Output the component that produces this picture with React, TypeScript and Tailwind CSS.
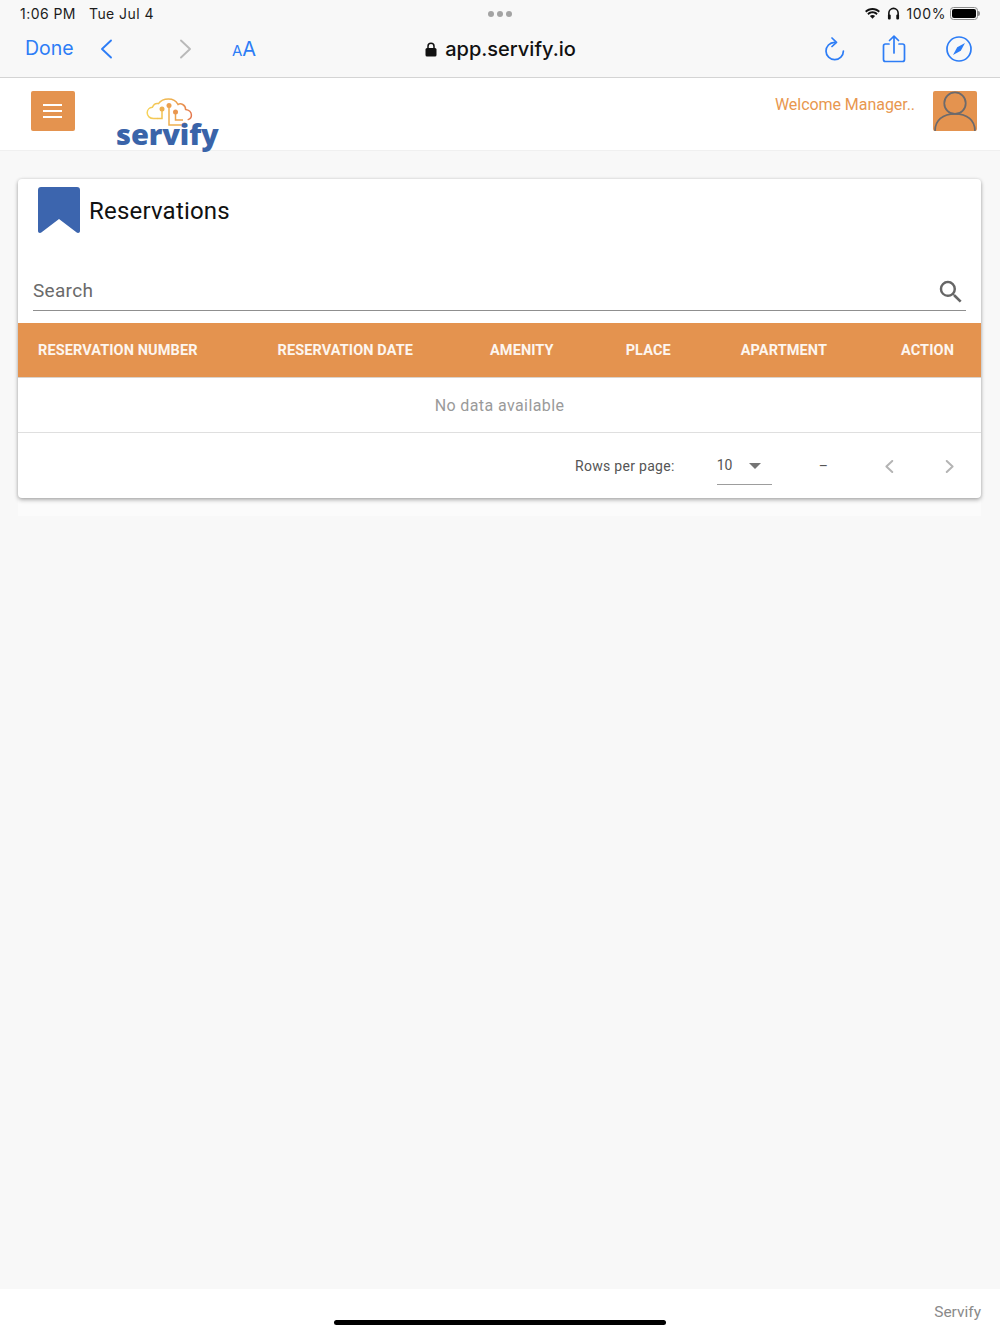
import React from "react";

function Chevron({ dir, className }: { dir: "l" | "r"; className: string }) {
  return (
    <svg viewBox="0 0 14 20" className={className} fill="none" stroke="currentColor" strokeWidth="1.9" strokeLinecap="round" strokeLinejoin="round">
      {dir === "l" ? <path d="M12 1.5 3 10l9 8.5" /> : <path d="M2 1.5 11 10l-9 8.5" />}
    </svg>
  );
}

function CloudLogo() {
  return (
    <svg viewBox="0 0 48 32" className="w-[48px] h-[32px] block" fill="none">
      <defs>
        <linearGradient id="g" x1="0" x2="1" y1="0" y2="0">
          <stop offset="0" stopColor="#f6d35b" />
          <stop offset="0.55" stopColor="#eeb04f" />
          <stop offset="1" stopColor="#e4794f" />
        </linearGradient>
      </defs>
      <path d="M11 20.500H7.500C3.800 20.500 1.200 18 1.200 14.800c0-3 2.300-5.300 5.200-5.500C7.500 6.600 10 5 12.500 5.600 14.600 2.600 18.400 1 22.400 1c4.400 0 8 2.400 9.600 5.500 1.400-.8 3.200-.8 4.700 0 1.800 1 2.900 2.800 2.900 4.900 3.400.4 5.800 2.800 5.800 5.600 0 2.400-1.300 4-3.200 4.600" stroke="url(#g)" strokeWidth="1.500" strokeLinecap="round" />
      <path d="M16 12v8.500h-5" stroke="#f2c452" strokeWidth="1.500" />
      <path d="M23 8v19h15" stroke="#eeb04f" strokeWidth="1.500" />
      <path d="M29.500 14v8h7.500" stroke="#eba44f" strokeWidth="1.500" />
      <circle cx="16" cy="11" r="2.500" fill="#eeb04f" />
      <circle cx="23" cy="7.500" r="2.500" fill="#eca14f" />
      <circle cx="29.500" cy="14" r="2.500" fill="#e9964f" />
      <circle cx="38.500" cy="27" r="2.500" fill="#e68f4f" />
    </svg>
  );
}

function Toolbar() {
  return (
    <div className="bg-[#f8f8f8] h-[78px] border-b border-[#d4d4d4] px-5 pt-[4px] font-['Inter',sans-serif]">
      <div className="flex items-center justify-between h-[18px] text-[14px] text-[#1c1c1c]">
        <div className="flex gap-[13px] w-[200px] tracking-[0.45px]">
          <span>1:06 PM</span>
          <span>Tue Jul 4</span>
        </div>
        <div className="flex gap-[3px] mt-[2px]">
          <span className="w-[6px] h-[6px] rounded-full bg-[#a3a3a3]" />
          <span className="w-[6px] h-[6px] rounded-full bg-[#a3a3a3]" />
          <span className="w-[6px] h-[6px] rounded-full bg-[#a3a3a3]" />
        </div>
        <div className="flex items-center justify-end w-[200px]">
          <svg viewBox="0 0 18 14" className="w-[17px] h-[13px]" fill="#111">
            <path d="M9 3.200c2.600 0 4.900 1 6.600 2.700l1.400-1.500C15 2.300 12.100 1 9 1S3 2.300 1 4.400l1.400 1.500C4.100 4.200 6.400 3.200 9 3.200Z" />
            <path d="M9 6.800c1.600 0 3.100.6 4.200 1.700l1.400-1.500C13.100 5.600 11.100 4.700 9 4.700S4.900 5.600 3.400 7l1.400 1.500C5.900 7.400 7.400 6.800 9 6.800Z" />
            <path d="M9 8.500c-1.100 0-2.100.4-2.800 1.100L9 12.600l2.800-3c-.7-.7-1.700-1.100-2.800-1.100Z" />
          </svg>
          <svg viewBox="0 0 14 14" className="w-[13px] h-[13px] ml-[6px]" fill="none" stroke="#111" strokeWidth="1.700">
            <path d="M2 9V6.500a5 5 0 0 1 10 0V9" />
            <rect x="1" y="8" width="3" height="5.500" rx="1.200" fill="#111" stroke="none" />
            <rect x="10" y="8" width="3" height="5.500" rx="1.200" fill="#111" stroke="none" />
          </svg>
          <span className="ml-[6px] tracking-[0.6px]">100%</span>
          <span className="relative w-[28px] h-[13px] rounded-[3.500px] border border-[#8c8c8c] p-[1px] ml-[4px] mr-[2px]">
            <span className="block w-[24px] h-full rounded-[2px] bg-black" />
            <span className="absolute -right-[3px] top-[3px] w-[2px] h-[5px] rounded-r-full bg-[#8c8c8c]" />
          </span>
        </div>
      </div>
      <div className="flex items-center h-[34px] mt-[10px] text-[#2d7df6]">
        <span className="text-[19.5px] ml-[5px] w-[73px]">Done</span>
        <Chevron dir="l" className="w-[14px] h-[20px] ml-[1px]" />
        <Chevron dir="r" className="w-[14px] h-[20px] ml-[66px] text-[#b9b9b9]" />
        <span className="ml-[39px] w-[30px] whitespace-nowrap">
          <span className="text-[15px]">A</span>
          <span className="text-[20px]">A</span>
        </span>
        <div className="flex-1 flex items-center justify-center text-[#111] font-medium text-[20px] mr-[84px]">
          <svg viewBox="0 0 12 15" className="w-[12px] h-[15px] mr-[8px]" fill="#111">
            <path d="M3 6.500V4.200a3 3 0 0 1 6 0v2.300" fill="none" stroke="#111" strokeWidth="1.500" />
            <rect x="0.500" y="6" width="11" height="8.500" rx="1.500" />
          </svg>
          app.servify.io
        </div>
        <svg viewBox="0 0 22 24" className="w-[22px] h-[24px] mr-[36px] ml-[1px]" fill="none" stroke="currentColor" strokeWidth="1.700" strokeLinecap="round" strokeLinejoin="round">
          <path d="M10.500 5.300A8.700 8.700 0 1 0 19.400 14" />
          <path d="m8 1 4.500 4.300L8 9.500" />
        </svg>
        <svg viewBox="0 0 24 28" className="w-[24px] h-[28px] mr-[40px]" fill="none" stroke="currentColor" strokeWidth="1.700" strokeLinecap="round" strokeLinejoin="round">
          <path d="M7 9H3.500A2 2 0 0 0 1.500 11v13.500a2 2 0 0 0 2 2h17a2 2 0 0 0 2-2V11a2 2 0 0 0-2-2H17" />
          <path d="M12 18V1.500M7.500 5.500 12 1.200l4.500 4.300" />
        </svg>
        <svg viewBox="0 0 26 26" className="w-[26px] h-[26px] mr-[8px]" fill="none">
          <circle cx="13" cy="13" r="12" stroke="currentColor" strokeWidth="1.700" />
          <path d="M19 7 14.800 14.800 7 19l4.200-7.800Z" fill="currentColor" />
        </svg>
      </div>
    </div>
  );
}

function Header() {
  return (
    <div className="bg-white h-[73px] border-b border-[#f0f0f0] flex pl-[30.500px] pr-[23px] pt-[13px] font-['Roboto',sans-serif]">
      <button className="w-[44px] h-[40px] rounded-[2px] bg-[#e4934f] flex flex-col items-center justify-center gap-[4px]">
        <span className="w-[19px] h-[2px] bg-white" />
        <span className="w-[19px] h-[2px] bg-white" />
        <span className="w-[19px] h-[2px] bg-white" />
      </button>
      <div className="ml-[41.500px] relative w-[104px]">
        <div className="ml-[30px] mt-[7px]"><CloudLogo /></div>
        <div className="absolute left-0 top-[23px] text-[29px] leading-[40px] font-extrabold text-[#3a64a9] font-['Open_Sans',sans-serif] tracking-[-0.1px]">servify</div>
      </div>
      <div className="ml-auto flex">
        <span className="text-[16px] leading-[18px] mt-[5px] text-[#e8974f] tracking-[-0.05px]">Welcome Manager..</span>
        <div className="ml-[18px] w-[44px] h-[40px] rounded-[2px] bg-[#e4934f] overflow-hidden">
          <svg viewBox="0 0 44 41" className="w-[44px] h-[40px]" fill="none" stroke="#6c6a6c" strokeWidth="1.800">
            <circle cx="22" cy="12.500" r="11" />
            <path d="M1.500 41c0-11 8-17.500 20.500-17.500S42.500 30 42.500 41" />
          </svg>
        </div>
      </div>
    </div>
  );
}

const columns = [
  { label: "RESERVATION NUMBER", cls: "" },
  { label: "RESERVATION DATE", cls: "ml-[80px]" },
  { label: "AMENITY", cls: "ml-[77px]" },
  { label: "PLACE", cls: "ml-[72px]" },
  { label: "APARTMENT", cls: "ml-[70px]" },
  { label: "ACTION", cls: "ml-[74px]" },
];

function Card() {
  return (
    <div className="bg-white rounded-[4px] shadow-[0_2px_4px_rgba(0,0,0,0.3),0_0_3px_rgba(0,0,0,0.12)] font-['Roboto',sans-serif]">
      <div className="flex h-[88px] pl-5 pt-2">
        <svg viewBox="0 0 42 46" className="w-[42px] h-[46px]">
          <path d="M3 0h36a3 3 0 0 1 3 3v41c0 1.800-2 2.600-3.300 1.500L21 32 3.300 45.500C2 46.600 0 45.800 0 44V3a3 3 0 0 1 3-3Z" fill="#3c65ae" />
        </svg>
        <h1 className="ml-[9px] mt-[9px] text-[24px] leading-[30px] text-[#111] tracking-[0.2px]">Reservations</h1>
      </div>
      <div className="mx-[15px] h-[44px] border-b border-[#8f8f8f] flex items-center justify-between pt-[6px]">
        <span className="text-[19px] text-[#6a6a6a] tracking-[0.3px]">Search</span>
        <svg viewBox="0 0 24 24" className="w-[30px] h-[30px]" fill="#666">
          <path d="M15.500 14h-.79l-.28-.27A6.470 6.470 0 0 0 16 9.500 6.500 6.500 0 1 0 9.500 16c1.610 0 3.090-.59 4.230-1.570l.27.28v.79l5 4.990L20.490 19l-4.990-5Zm-6 0C7.010 14 5 11.990 5 9.500S7.010 5 9.500 5 14 7.010 14 9.500 11.990 14 9.500 14Z" />
        </svg>
      </div>
      <div className="mt-3 h-[55px] bg-[#e4934f] flex items-center pl-5 pt-[2px] text-[14.500px] tracking-[0.1px] font-bold text-[#fdf6ef] border-b border-[#d9d3cd] whitespace-nowrap">
        {columns.map((c) => (
          <span key={c.label} className={c.cls}>{c.label}</span>
        ))}
      </div>
      <div className="h-[55px] border-b border-[#dfdfdf] flex items-center justify-center pt-[1px] text-[#9a9a9a] text-[16px] tracking-[0.4px]">
        No data available
      </div>
      <div className="h-[65px] flex items-center text-[14px] text-[#555] pt-[1px]">
        <span className="ml-[557px] tracking-[0.3px]">Rows per page:</span>
        <div className="ml-[42px] w-[55px] h-[38px] border-b border-[#9d9d9d] flex items-center">
          <span>10</span>
          <span className="ml-[17px] w-0 h-0 border-x-[6.500px] border-x-transparent border-t-[6px] border-t-[#757575]" />
        </div>
        <span className="ml-[47px]">–</span>
        <Chevron dir="l" className="w-[10px] h-[13px] ml-[56px] text-[#b4b4b4] stroke-[3]" />
        <Chevron dir="r" className="w-[10px] h-[13px] ml-[51px] text-[#b4b4b4] stroke-[3]" />
      </div>
    </div>
  );
}

export default function App() {
  return (
    <div className="w-[1000px] h-[1334px] bg-[#f8f8f8] flex flex-col overflow-hidden">
      <Toolbar />
      <Header />
      <div className="flex-1 px-[18px] pr-[19px] pt-[28px]">
        <div className="bg-[#fbfbfb] pb-[18px]">
          <Card />
        </div>
      </div>
      <div className="relative h-[45px] bg-white flex justify-end pr-[19px] pt-[14px] text-[15.500px] leading-[18px] text-[#8a8a8a] font-['Roboto',sans-serif]">
        Servify
        <div className="absolute left-[334px] bottom-[9px] w-[332px] h-[5px] rounded-full bg-black" />
      </div>
    </div>
  );
}
